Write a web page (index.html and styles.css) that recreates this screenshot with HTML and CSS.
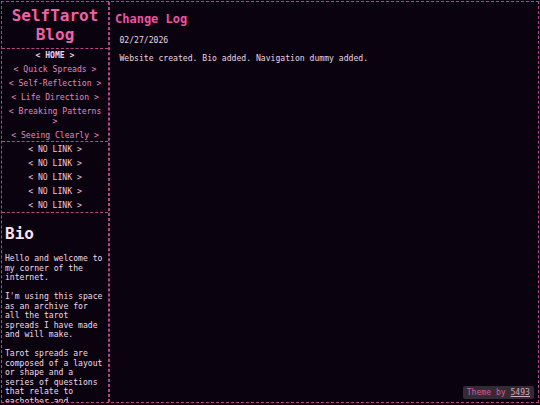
FILE: index.html
```html
<!DOCTYPE html>
<html lang="en">
<head>
<meta charset="utf-8">
<title>SelfTarot Blog</title>
<link rel="stylesheet" href="styles.css">
</head>
<body>
<div class="page">
  <aside class="sidebar">
    <div class="box title-box">
      <h1 class="site-title">SelfTarot Blog</h1>
    </div>
    <nav class="box nav nav-main">
      <a class="nav-link current" href="#">&lt; HOME &gt;</a>
      <a class="nav-link" href="#">&lt; Quick Spreads &gt;</a>
      <a class="nav-link" href="#">&lt; Self-Reflection &gt;</a>
      <a class="nav-link" href="#">&lt; Life Direction &gt;</a>
      <a class="nav-link" href="#">&lt; Breaking Patterns &gt;</a>
      <a class="nav-link" href="#">&lt; Seeing Clearly &gt;</a>
    </nav>
    <nav class="box nav nav-dummy">
      <span class="nav-link dummy">&lt; NO LINK &gt;</span>
      <span class="nav-link dummy">&lt; NO LINK &gt;</span>
      <span class="nav-link dummy">&lt; NO LINK &gt;</span>
      <span class="nav-link dummy">&lt; NO LINK &gt;</span>
      <span class="nav-link dummy">&lt; NO LINK &gt;</span>
    </nav>
    <section class="box bio">
      <h2 class="bio-title">Bio</h2>
      <p class="bio-text">Hello and welcome to my corner of the internet.</p>
      <p class="bio-text">I'm using this space as an archive for all the tarot spreads I have made and will make.</p>
      <p class="bio-text">Tarot spreads are composed of a layout or shape and a series of questions that relate to eachother and interlock to tell a story.</p>
    </section>
  </aside>
  <main class="main">
    <h2 class="main-title">Change Log</h2>
    <div class="entry">
      <p class="entry-date">02/27/2026</p>
      <p class="entry-text">Website created. Bio added. Navigation dummy added.</p>
    </div>
  </main>
</div>
<div class="credit">Theme by <a class="credit-link" href="#">5493</a></div>
</body>
</html>
```
FILE: styles.css
```css
html, body {
  margin: 0;
  padding: 0;
  background: #0b0210;
}
body {
  font-family: "DejaVu Sans Mono", monospace;
  font-size: 8.1px;
  color: #f0d8e6;
  overflow: hidden;
}
.page {
  margin: 1px;
  height: 402px;
  box-sizing: border-box;
  border: 1px dashed #b8478a;
  display: flex;
  overflow: hidden;
}
.sidebar {
  width: 107px;
  flex-shrink: 0;
  box-sizing: border-box;
  border-right: 1px dashed #b8478a;
  display: flex;
  flex-direction: column;
  overflow: hidden;
}
.box {
  flex-shrink: 0;
  border-bottom: 1px dashed #b8478a;
}
.title-box {
  padding: 4px 0 3.5px;
  text-align: center;
}
.site-title {
  margin: 0;
  font-size: 16px;
  line-height: normal;
  font-weight: bold;
  color: #f061a9;
}
.nav {
  padding: 1.5px 4px;
  display: flex;
  flex-direction: column;
  gap: 4px;
  text-align: center;
}
.nav-main {
  padding-bottom: 0.8px;
}
.nav-dummy {
  padding-top: 2.5px;
}
.nav-link {
  display: block;
  line-height: 10px;
  color: #e486bc;
  text-decoration: none;
}
.nav-link.current {
  font-weight: bold;
  color: #f7cfe6;
}
.nav-link.dummy {
  color: #f0c6de;
}
.bio {
  border-bottom: none;
  padding: 1px 3px 0;
  flex: 1;
}
.bio-title {
  margin: 10.7px 0;
  font-size: 16px;
  line-height: normal;
  font-weight: bold;
  color: #fde2f1;
}
.bio-text {
  margin: 0 0 9px;
  line-height: 9.6px;
  color: #f2dbe8;
}
.main {
  flex: 1;
  border-left: 1px dashed #b8478a;
  padding: 0 5px;
}
.main-title {
  margin: 10px 0;
  font-size: 12px;
  line-height: normal;
  font-weight: bold;
  color: #ef52a2;
}
.entry {
  padding-left: 4.5px;
}
.entry-date {
  margin: 0 0 8px;
  line-height: 9.6px;
  color: #ead6e2;
}
.entry-text {
  margin: 0;
  line-height: 9.6px;
  color: #ead6e2;
}
.credit {
  position: fixed;
  right: 6px;
  bottom: 6px;
  padding: 2px 4px;
  line-height: 9.3px;
  background: #352b34;
  border-radius: 2px;
  color: #d35ca1;
}
.credit-link {
  color: #cfa8c0;
  text-decoration: underline;
}
```
